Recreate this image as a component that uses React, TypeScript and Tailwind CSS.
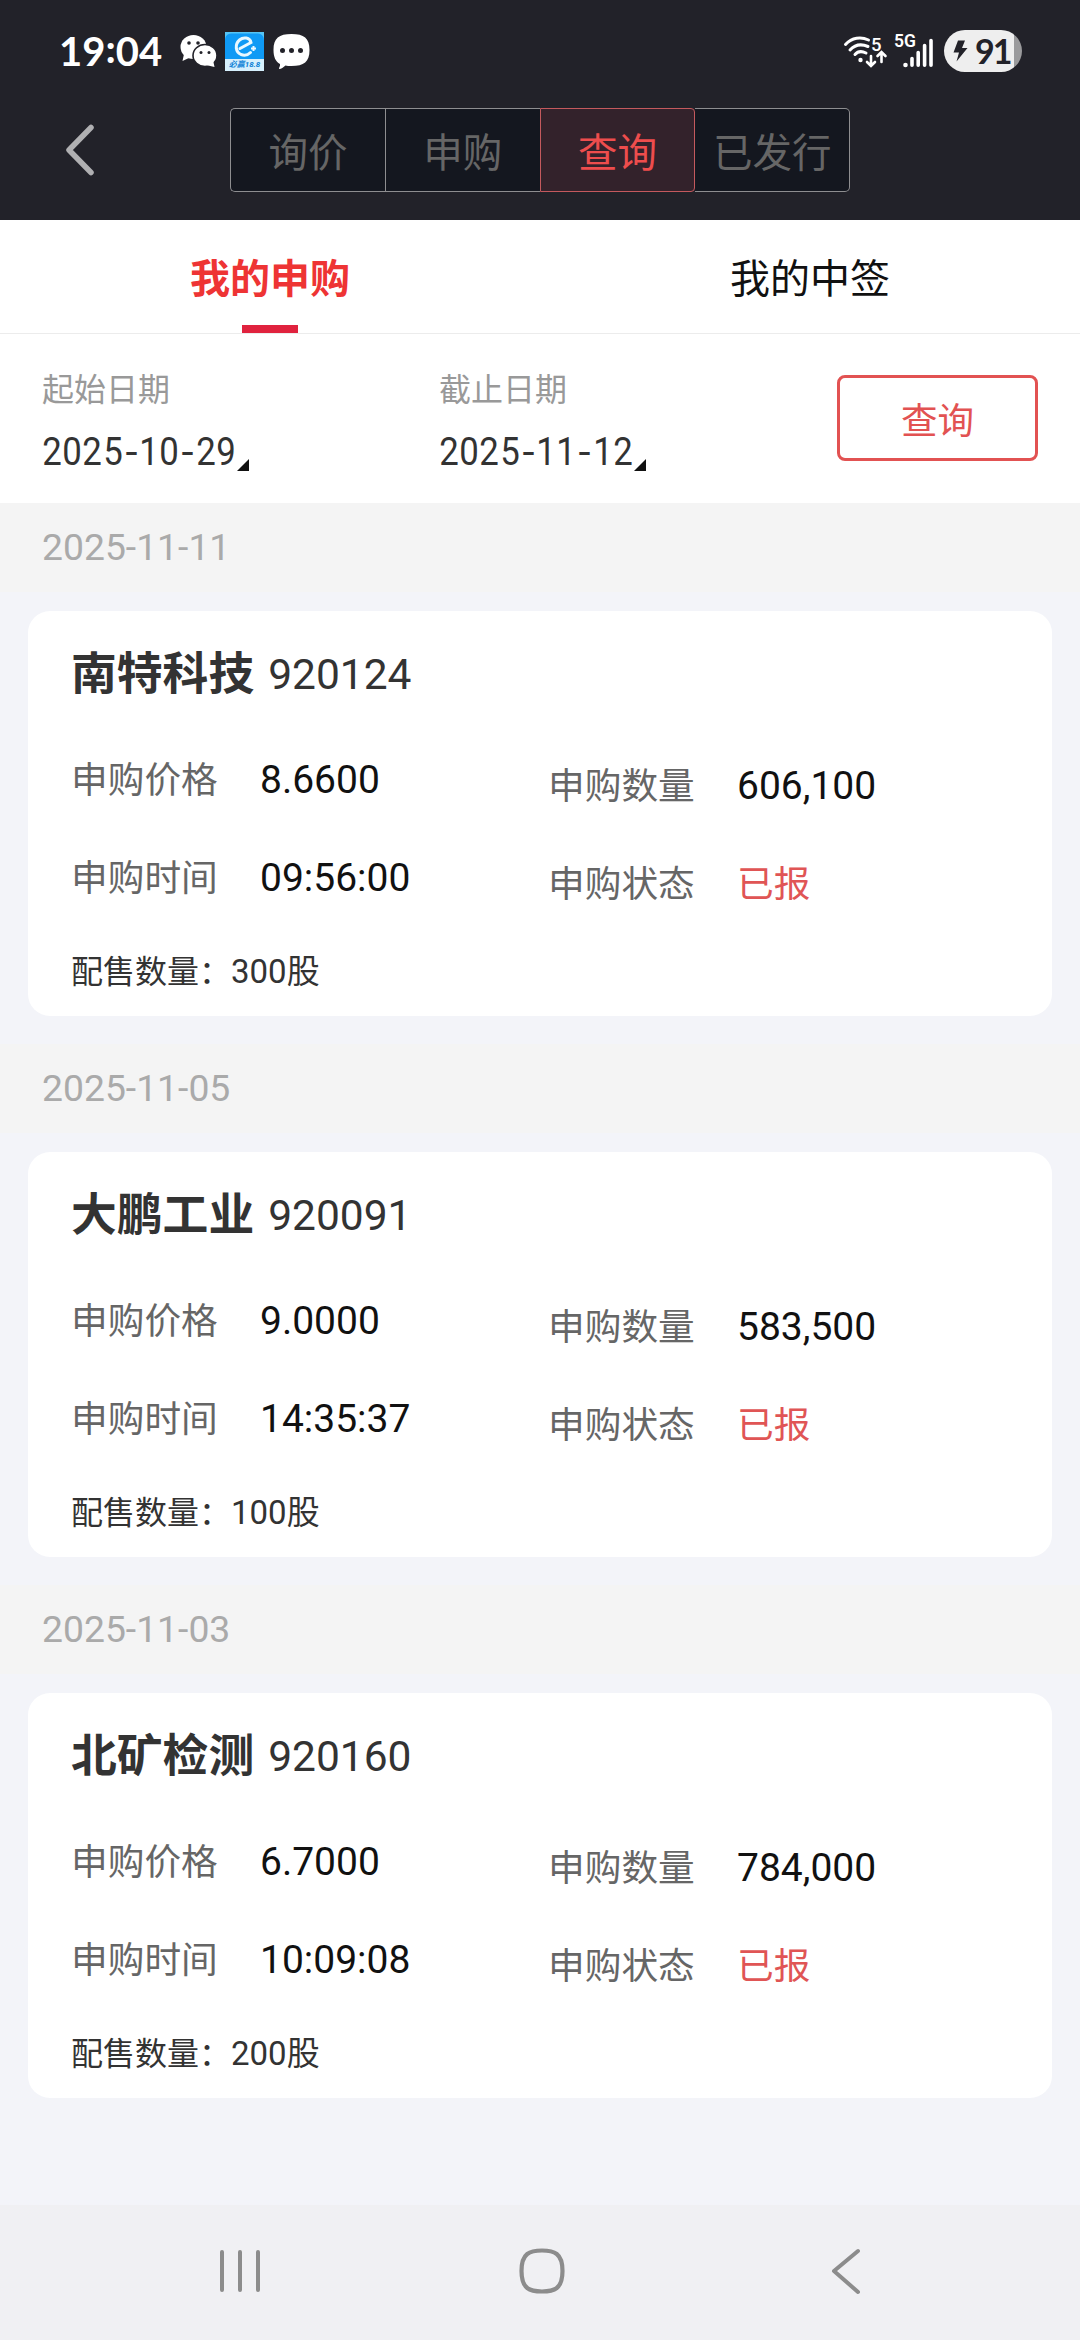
import { useState } from 'react';
import clsx from 'clsx';

interface Order { date: string; name: string; code: string; price: string; qty: string; time: string; status: string; allot: string }

const orders: Order[] = [
  { date: '2025-11-11', name: '南特科技', code: '920124', price: '8.6600', qty: '606,100', time: '09:56:00', status: '已报', allot: '300股' },
  { date: '2025-11-05', name: '大鹏工业', code: '920091', price: '9.0000', qty: '583,500', time: '14:35:37', status: '已报', allot: '100股' },
  { date: '2025-11-03', name: '北矿检测', code: '920160', price: '6.7000', qty: '784,000', time: '10:09:08', status: '已报', allot: '200股' },
];

const segments = ['询价', '申购', '查询', '已发行'];
const tabs = ['我的申购', '我的中签'];

function StatusBar() {
  return (
    <div className="flex h-[102px] items-center pl-[59px] pr-[58px] text-white">
      <span className="w-[120px] font-['Lato'] text-[40px] leading-[40px] font-bold">19<span className="relative -top-[3px]">:</span>04</span>
      <svg className="w-[38px] h-[34px]" viewBox="0 0 38 34">
        <ellipse cx="14.5" cy="13" rx="13" ry="12" fill="#fff" />
        <path d="M5 20 3.500 27 12 23Z" fill="#fff" />
        <ellipse cx="26" cy="21.500" rx="12" ry="11" fill="#fff" stroke="#222229" strokeWidth="1.600" />
        <path d="M27 31 35.500 33 34 26Z" fill="#fff" />
        <circle cx="10" cy="9" r="1.800" fill="#222229" />
        <circle cx="19" cy="9" r="1.800" fill="#222229" />
        <circle cx="22" cy="18.500" r="1.500" fill="#222229" />
        <circle cx="30" cy="18.500" r="1.500" fill="#222229" />
      </svg>
      <div className="ml-[8px] flex h-[39px] w-[39px] flex-col items-center bg-[#0f9af5]">
        <svg className="h-[27px] w-[39px]" viewBox="0 0 39 27" fill="none">
          <path d="M0 9C0 3 3 1.500 8 1.500H31C36 1.500 39 3 39 9V0H0Z" fill="#55c4f5" />
          <path d="M15 16.500 26 10.500C25 5.500 18.500 4.500 14.500 8C9.500 12.500 10.500 20 16 22.500C20 24 23.500 22.500 25.500 20.500" stroke="#e9f8ff" strokeWidth="3" strokeLinecap="round" />
          <path d="M28.500 14v5M26 16.500h5" stroke="#e9f8ff" strokeWidth="2" />
        </svg>
        <span className="h-[12px] w-full bg-[#d6f0fd] text-center font-['Roboto','Noto_Sans_CJK_SC',sans-serif] text-[8px] leading-[12px] font-bold whitespace-nowrap text-[#0a7fd6] italic">必赢18.8</span>
      </div>
      <svg className="ml-[9px] h-[37px] w-[37px]" viewBox="0 0 37 37">
        <path d="M18.500 1C31 1 36.500 5 36.500 17S31 33 18.500 33C16 33 14 33 12.500 32.500C10.500 34.500 8 35.800 6.500 36C5.500 36 6 35 6.500 34C7 33 7.200 32 7 31C2.500 28.500.500 24 .500 17C.500 5 6 1 18.500 1Z" fill="#fff" />
        <circle cx="9.500" cy="17.500" r="2.500" fill="#222229" />
        <circle cx="18.500" cy="17.500" r="2.500" fill="#222229" />
        <circle cx="27.500" cy="17.500" r="2.500" fill="#222229" />
      </svg>

      <svg className="ml-auto h-[42px] w-[91px]" viewBox="842 30 91 42" fill="none" stroke="#fff" strokeLinecap="round">
        <path d="M844.500 44.500C851 37.500 860 36.500 867.500 40" strokeWidth="3" />
        <path d="M849 50C854 44.500 861 44 867 46.500" strokeWidth="3" />
        <path d="M854 54.500C857 51 861 51 865 53" strokeWidth="3" />
        <circle cx="859.500" cy="60" r="2.200" fill="#fff" stroke="none" />
        <path d="M870 56v9M866 62l4 4 4-4M880.500 62v-9M876.500 56l4-4 4 4" strokeWidth="2.600" />
        <text x="870" y="50.500" fill="#fff" stroke="none" fontFamily="Roboto" fontSize="18.500" fontWeight="500">5</text>
        <text x="893" y="47" fill="#fff" stroke="none" fontFamily="Roboto" fontSize="17.500" fontWeight="600">5G</text>
        <circle cx="904.500" cy="65" r="2.300" fill="#fff" stroke="none" />
        <path d="M911 58.500v6.800M917.200 52.500v12.800M923.600 45.500v19.800M930 40.500v24.800" strokeWidth="3.600" />
      </svg>
      <div className="ml-[10px] flex h-[42px] w-[78px] items-center overflow-hidden rounded-full bg-[linear-gradient(to_right,#eeeeee_90%,#9a9a9c_90%)] pl-[9px] text-[#222229]">
        <svg className="h-[22px] w-[15px]" viewBox="0 0 15 22">
          <path d="M5 .500H12L9 8H14.500L3.500 21.500L6 12.500H.500Z" fill="#222229" />
        </svg>
        <span className="ml-[7px] font-['Lato'] text-[34px] leading-[34px] font-bold tracking-[-2px]">91</span>
      </div>
    </div>
  );
}

// digits sit in narrow cells, the hyphens in slightly narrower ones
function PickedDate({ label, value }: { label: string; value: string }) {
  return (
    <div className="w-[397px]">
      <p className="text-[32px] leading-[42px] text-[#999]">{label}</p>
      <div className="mt-[19px] flex h-[40px] items-end text-[#333]">
        <span className="flex w-[195px] pt-[3px] text-[39.5px] leading-[37px]">
          {value.split('').map((c, i) => (
            <span key={i} className={clsx('flex justify-center', c === '-' ? 'w-[16.500px]' : 'w-[20.200px]')}>
              <span className={c === '-' ? 'scale-x-[1.1]' : 'scale-x-[.88]'}>{c}</span>
            </span>
          ))}
        </span>
        <svg className="mb-[-1px] h-[12px] w-[12px]" viewBox="0 0 12 12"><path d="M12 0V12H0Z" fill="#111" /></svg>
      </div>
    </div>
  );
}

function Field({ label, value, red }: { label: string; value: string; red?: boolean }) {
  return (
    <div className="flex h-[98px] items-center">
      <span className="w-[189px] text-[36.700px] text-[#666]">{label}</span>
      <span className={red ? 'text-[36.700px] text-[#e05555]' : 'pb-[2px] text-[39px] text-[#111]'}>{value}</span>
    </div>
  );
}

function OrderCard({ order }: { order: Order }) {
  return (
    <section>
      <p className="h-[89px] bg-[#f4f4f4] pl-[42px] text-[37.300px] leading-[89px] text-[#aaa]">{order.date}</p>
      <div className="mx-[28px] mt-[19px] mb-[28px] h-[405px] rounded-[22px] bg-white pl-[43px]">
        <h3 className="flex h-[121px] items-center pt-[7px] text-[#333]">
          <span className="text-[45.800px] font-bold">{order.name}</span>
          <span className="ml-[14px] text-[42.500px]">{order.code}</span>
        </h3>
        <div className="flex">
          <div className="w-[477px]">
            <Field label="申购价格" value={order.price} />
            <Field label="申购时间" value={order.time} />
          </div>
          <div className="pt-[6px]">
            <Field label="申购数量" value={order.qty} />
            <Field label="申购状态" value={order.status} red />
          </div>
        </div>
        <p className="mt-[18px] text-[32px] leading-[40px] text-[#333]">配售数量：<span className="text-[33px]">{order.allot}</span></p>
      </div>
    </section>
  );
}

export default function App() {
  const [segment, setSegment] = useState(2);
  const [tab, setTab] = useState(0);

  return (
    <div className="flex h-[2340px] w-[1080px] flex-col overflow-hidden bg-[#f3f4f9] font-['Roboto','Noto_Sans_CJK_SC',sans-serif]">
      <header className="h-[220px] bg-[#222229]">
        <StatusBar />
        <div className="flex h-[96px] items-center pl-[64px]">
          <svg className="h-[52px] w-[30px]" viewBox="0 0 30 52" fill="none" stroke="#b0b0b2" strokeWidth="5.500" strokeLinecap="round" strokeLinejoin="round">
            <path d="M27 3.500 5 26 27 48.500" />
          </svg>
          <div className="ml-[136px] flex h-[84px] w-[620px]">
            {segments.map((s, i) => (
              <button
                key={s}
                onClick={() => setSegment(i)}
                className={clsx(
                  'flex-1 pt-[7px] text-[39.500px] whitespace-nowrap',
                  i === segment ? 'rounded-r-[4px] border border-[#c4595d] bg-[#33222b] text-[#ee4d4d]' : 'border-y border-[#8e8e90] bg-[#14171f] text-[#666]',
                  i === 0 && 'rounded-l-[5px] border-l',
                  i === 1 && 'border-l',
                  i === 3 && 'rounded-r-[5px] border-r',
                )}
              >
                {s}
              </button>
            ))}
          </div>
        </div>
      </header>

      <nav className="flex h-[114px] border-b border-[#ececec] bg-white">
        {tabs.map((t, i) => (
          <button key={t} onClick={() => setTab(i)} className="flex flex-1 flex-col items-center">
            <span className={clsx('h-[105px] text-[40px] leading-[120px]', i === tab ? 'font-bold text-[#ee3434]' : 'text-[#111]')}>{t}</span>
            {i === tab && <span className="h-[8px] w-[56px] bg-[#e0223e]" />}
          </button>
        ))}
      </nav>

      <div className="flex h-[169px] bg-white pt-[35px] pl-[42px]">
        <PickedDate label="起始日期" value="2025-10-29" />
        <PickedDate label="截止日期" value="2025-11-12" />
        <button className="mt-[6px] ml-[1px] h-[86px] w-[201px] rounded-[8px] border-3 border-[#e25252] pt-[9px] text-[36.500px] text-[#e25252]">查询</button>
      </div>

      <main className="flex-1">
        {orders.map(o => <OrderCard key={o.code} order={o} />)}
      </main>

      <footer className="flex h-[135px] items-center bg-[#f0f0f3] pb-[4px] pl-[219px]">
        <svg className="h-[48px] w-[42px]" viewBox="0 0 42 48" stroke="#8c8c8c" strokeWidth="4" strokeLinecap="round">
          <path d="M3 5v38M21 5v38M39 5v38" />
        </svg>
        <svg className="ml-[256px] h-[50px] w-[50px]" viewBox="0 0 50 50" fill="none" stroke="#8c8c8c" strokeWidth="4.200">
          <path d="M25 4.500C37 4.500 45.500 7 45.500 25S37 45.500 25 45.500S4.500 43 4.500 25S13 4.500 25 4.500Z" />
        </svg>
        <svg className="ml-[262px] h-[48px] w-[34px]" viewBox="0 0 34 48" fill="none" stroke="#8c8c8c" strokeWidth="4" strokeLinecap="round" strokeLinejoin="round">
          <path d="M29 4 5 24 29 45" />
        </svg>
      </footer>
    </div>
  );
}
